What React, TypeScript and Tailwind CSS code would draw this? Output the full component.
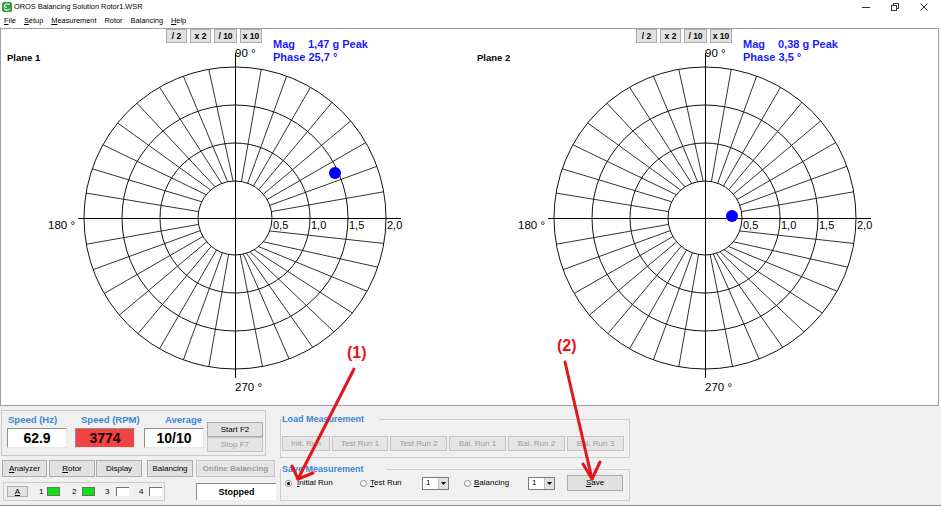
import React from 'react';

// spokes of the polar grid: [angle on inner ring, angle on outer ring]
const SPOKES: [number, number][] = [
  [10, 10], [20, 20], [30, 30], [40, 40], [50, 50], [60, 60], [70, 70], [80, 80],
  [93, 100], [101.5, 110], [111, 120], [122.5, 130.5], [131, 141], [141, 151], [154, 161], [170, 170.5],
  [190, 190], [200, 200], [210, 210], [220, 220], [230, 230], [240, 240], [250, 250], [260, 260],
  [278, 280.5], [283, 291], [288, 301], [294, 311], [301, 321], [309.5, 331], [320, 341], [339.5, 350.3],
];
const RINGS = [37, 75, 113, 151];

function PolarPlot({ dot }: { dot: [number, number] }) {
  const cx = 234;
  const cy = 189;
  const p = (r: number, a: number) => [cx + r * Math.cos((a * Math.PI) / 180), cy - r * Math.sin((a * Math.PI) / 180)];
  return (
    <svg width="470" height="376" className="block" fontFamily="Liberation Sans, Arial, sans-serif">
      {SPOKES.map(([a, b], i) => {
        const [x1, y1] = p(RINGS[0], a);
        const [x2, y2] = p(RINGS[3], b);
        return <line key={i} x1={x1} y1={y1} x2={x2} y2={y2} stroke="#333" strokeWidth="1" />;
      })}
      {RINGS.map((r) => (
        <circle key={r} cx={cx} cy={cy} r={r} fill="none" stroke="#111" strokeWidth="1" />
      ))}
      <line x1={cx + 0.5} y1="24" x2={cx + 0.5} y2="349" stroke="#000" strokeWidth="1" />
      <line x1="77" y1={cy + 0.5} x2="400" y2={cy + 0.5} stroke="#000" strokeWidth="1" />
      <text x={cx} y="28" fontSize="11.5" fill="#000">90 °</text>
      <text x="47" y="200" fontSize="11.5" fill="#000">180 °</text>
      <text x={cx} y="362" fontSize="11.5" fill="#000">270 °</text>
      <text x="272" y="200" fontSize="11" fill="#000">0,5</text>
      <text x="310" y="200" fontSize="11" fill="#000">1,0</text>
      <text x="348" y="200" fontSize="11" fill="#000">1,5</text>
      <text x="386" y="200" fontSize="11" fill="#000">2,0</text>
      <circle cx={dot[0]} cy={dot[1]} r="6" fill="#0000ff" />
    </svg>
  );
}

function ZoomBtn({ label, w }: { label: string; w: string }) {
  return (
    <div className={`${w} h-[14px] bg-[#e1e1e1] border border-[#adadad] flex items-center justify-center text-[8.5px] font-bold text-black leading-none`}>
      {label}
    </div>
  );
}

function Plane({ name, mag, phase, dot }: { name: string; mag: string; phase: string; dot: [number, number] }) {
  return (
    <div className="relative w-[470px] h-[376px] shrink-0">
      <PolarPlot dot={dot} />
      <div className="absolute top-0 left-0 flex items-start">
        <span className="w-[165px] shrink-0 pl-[6px] mt-[23px] text-[9.5px] font-bold leading-[11px] text-black">{name}</span>
        <div className="flex gap-[3px]">
          <ZoomBtn label="/ 2" w="w-[21px]" />
          <ZoomBtn label="x 2" w="w-[21px]" />
          <ZoomBtn label="/ 10" w="w-[23px]" />
          <ZoomBtn label="x 10" w="w-[22px]" />
        </div>
        <div className="ml-[11px] mt-[9px] text-[11px] font-bold leading-[13px] text-[#1a1aff] whitespace-nowrap">
          <div>
            <span className="mr-[13px]">Mag</span>
            {mag}
          </div>
          <div>Phase {phase}</div>
        </div>
      </div>
    </div>
  );
}

function Btn({ children, className = '', disabled = false }: { children: React.ReactNode; className?: string; disabled?: boolean }) {
  return (
    <div
      className={`flex items-center justify-center text-[8px] leading-none whitespace-nowrap shrink-0 ${
        disabled ? 'bg-[#e5e5e5] border border-[#c4c4c4] text-[#9c9c9c]' : 'bg-[#e1e1e1] border border-[#adadad] text-black'
      } ${className}`}
    >
      {children}
    </div>
  );
}

function Radio({ checked = false }: { checked?: boolean }) {
  return (
    <div className="w-[7px] h-[7px] rounded-full border border-[#8a8a8a] bg-white flex items-center justify-center shrink-0">
      {checked && <div className="w-[3px] h-[3px] rounded-full bg-black" />}
    </div>
  );
}

function Combo() {
  return (
    <div className="w-[27px] h-[13px] bg-white border border-[#7a7a7a] flex items-center shrink-0">
      <span className="flex-1 pl-[3px] text-[8px] leading-none">1</span>
      <div className="w-[10px] h-[11px] bg-[#e1e1e1] border-l border-[#c0c0c0] flex items-center justify-center">
        <svg width="5" height="3" viewBox="0 0 5 3">
          <path d="M0 0 H5 L2.5 3 Z" fill="#000" />
        </svg>
      </div>
    </div>
  );
}

function SpeedField({ label, labelIndent, value, red = false }: { label: string; labelIndent: string; value: string; red?: boolean }) {
  return (
    <div className="w-[60px] shrink-0 flex flex-col">
      <span className={`${labelIndent} mt-[4px] h-[9px] text-[9.5px] font-bold leading-[9px] text-[#3d85d6] whitespace-nowrap`}>{label}</span>
      <div
        className={`mt-[4px] w-[60px] h-[20px] flex items-center justify-center text-[14px] font-bold leading-none border-t border-l border-[#8f8f8f] border-r border-b border-r-[#e8e8e8] border-b-[#e8e8e8] ${
          red ? 'bg-[#f04444] text-[#1a0000]' : 'bg-white text-black'
        }`}
      >
        {value}
      </div>
    </div>
  );
}

export default function App() {
  return (
    <div className="relative w-[941px] h-[506px] overflow-hidden bg-white font-['Liberation_Sans',Arial,sans-serif] text-black select-none">
      {/* Title bar */}
      <div className="h-[14px] flex items-center">
        <svg width="10" height="10" viewBox="0 0 10 10" className="ml-[2px]">
          <rect width="10" height="10" rx="2" fill="#2f9e3a" />
          <path d="M7.5 3 C6.5 1.6 3 1.6 2.4 3.6 C2 5 3.5 5.4 5 5.2 M2.4 6.8 C3.5 8.6 7 8.4 7.6 6.6" stroke="#fff" strokeWidth="1.2" fill="none" />
        </svg>
        <span className="ml-[2px] text-[7.4px] leading-none">OROS Balancing Solution Rotor1.WSR</span>
        <div className="ml-auto flex items-center gap-[21px] pr-[13px]">
          <svg width="8" height="8" viewBox="0 0 8 8">
            <line x1="0" y1="4.5" x2="8" y2="4.5" stroke="#333" />
          </svg>
          <svg width="8" height="8" viewBox="0 0 8 8">
            <rect x="0.5" y="2.5" width="5" height="5" fill="none" stroke="#333" />
            <path d="M2.5 2.5 V0.5 H7.5 V5.5 H5.5" fill="none" stroke="#333" />
          </svg>
          <svg width="8" height="8" viewBox="0 0 8 8">
            <path d="M0.5 0.5 L7.5 7.5 M7.5 0.5 L0.5 7.5" stroke="#333" />
          </svg>
        </div>
      </div>

      {/* Menu bar */}
      <div className="h-[14px] flex items-center gap-[8px] pl-[4px] text-[7.4px] leading-none">
        <span><u>F</u>ile</span>
        <span><u>S</u>etup</span>
        <span><u>M</u>easurement</span>
        <span>Rotor</span>
        <span>Balancing</span>
        <span><u>H</u>elp</span>
      </div>

      {/* Plot area */}
      <div className="w-[939px] h-[378px] border border-[#a0a0a0] bg-white flex">
        <Plane name="Plane 1" mag="1,47 g Peak" phase="25,7 °" dot={[334, 144]} />
        <Plane name="Plane 2" mag="0,38 g Peak" phase="3,5 °" dot={[261, 187]} />
      </div>

      {/* Control panel */}
      <div className="h-[100px] bg-[#f0f0f0] flex border-b border-[#8a8a8a]">
        <div className="w-[279px] flex flex-col shrink-0">
          <div className="ml-[1px] mt-[4px] w-[265px] h-[46px] border border-[#cbcbcb] flex">
            <div className="ml-[5px]">
              <SpeedField label="Speed (Hz)" labelIndent="ml-[1px]" value="62.9" />
            </div>
            <div className="ml-[8px]">
              <SpeedField label="Speed (RPM)" labelIndent="ml-[6px]" value="3774" red />
            </div>
            <div className="ml-[9px]">
              <SpeedField label="Average" labelIndent="ml-[21px]" value="10/10" />
            </div>
            <div className="flex flex-col ml-[3px] mt-[11px]">
              <Btn className="w-[56px] h-[15px]">Start F2</Btn>
              <Btn className="w-[56px] h-[15px]" disabled>Stop F7</Btn>
            </div>
          </div>

          <div className="flex mt-[4px] h-[17px]">
            <Btn className="ml-[2px] w-[45px]"><u>A</u>nalyzer</Btn>
            <Btn className="ml-[2px] w-[46px]"><u>R</u>otor</Btn>
            <Btn className="ml-[1px] w-[46px]">Display</Btn>
            <Btn className="ml-[5px] w-[46px]">Balancin<u>g</u></Btn>
            <Btn className="ml-[3px] w-[79px] font-bold" disabled>Online Balancing</Btn>
          </div>

          <div className="flex mt-[5px]">
            <div className="ml-[3px] w-[162px] h-[19px] border border-[#cbcbcb] flex items-center text-[8px] leading-none">
              <Btn className="ml-[3px] w-[21px] h-[11px]"><u>A</u></Btn>
              <span className="ml-[11px] w-[8px]">1</span>
              <div className="w-[13px] h-[9px] bg-[#10e010] border border-[#6f6f6f]" />
              <span className="ml-[12px] w-[10px]">2</span>
              <div className="w-[13px] h-[9px] bg-[#10e010] border border-[#6f6f6f]" />
              <span className="ml-[10px] w-[11px]">3</span>
              <div className="w-[13px] h-[9px] bg-white border-t border-l border-[#6f6f6f]" />
              <span className="ml-[10px] w-[10px]">4</span>
              <div className="w-[13px] h-[9px] bg-white border-t border-l border-[#6f6f6f]" />
            </div>
            <div className="ml-[31px] mt-[1px] w-[80px] h-[17px] bg-white border-t border-l border-[#8f8f8f] flex items-center justify-center text-[9px] font-bold leading-none">
              Stopped
            </div>
          </div>
        </div>

        <div className="w-[350px] ml-[1px] flex flex-col shrink-0">
          <fieldset className="mt-[8px] border border-[#cfcfcf] pb-[6px]">
            <legend className="ml-[1px] pr-[15px] text-[9px] font-bold leading-[10px] text-[#3d85d6]">Load Measurement</legend>
            <div className="flex gap-[2px] mt-[12px] ml-[1px]">
              <Btn className="w-[48px] h-[15px]" disabled>Init. Run</Btn>
              <Btn className="w-[56px] h-[15px]" disabled>Test Run 1</Btn>
              <Btn className="w-[57px] h-[15px]" disabled>Test Run 2</Btn>
              <Btn className="w-[57px] h-[15px]" disabled>Bal. Run 1</Btn>
              <Btn className="w-[57px] h-[15px]" disabled>Bal. Run 2</Btn>
              <Btn className="w-[57px] h-[15px]" disabled>Bal. Run 3</Btn>
            </div>
          </fieldset>
          <fieldset className="mt-[6px] border border-[#cfcfcf] pb-[9px]">
            <legend className="ml-[1px] pr-[22px] text-[9px] font-bold leading-[10px] text-[#3d85d6]">Save Measurement</legend>
            <div className="flex items-center h-[16px] mt-[1px] text-[8px] leading-none">
              <div className="ml-[4px]"><Radio checked /></div>
              <span className="ml-[5px] w-[63px]"><u>I</u>nitial Run</span>
              <Radio />
              <span className="ml-[3px] w-[52px]"><u>T</u>est Run</span>
              <Combo />
              <div className="ml-[15px]"><Radio /></div>
              <span className="ml-[3px] w-[54px]"><u>B</u>alancing</span>
              <Combo />
              <Btn className="ml-[12px] w-[56px] h-[16px]"><u>S</u>ave</Btn>
            </div>
          </fieldset>
        </div>
      </div>

      {/* Red annotations */}
      <svg className="absolute inset-0 pointer-events-none" width="941" height="506" fontFamily="Liberation Sans, Arial, sans-serif">
        <text x="347" y="358" fontSize="16" fontWeight="bold" fill="#e3161c">(1)</text>
        <text x="557" y="351" fontSize="16" fontWeight="bold" fill="#e3161c">(2)</text>
        <g stroke="#e3161c" strokeWidth="3" strokeLinecap="round" fill="none">
          <line x1="354" y1="369" x2="298" y2="479" />
          <path d="M292 466 L298 479 L313 473" strokeLinejoin="round" />
          <line x1="565" y1="362" x2="592" y2="479" />
          <path d="M583 464 L592 479 L600 462" strokeLinejoin="round" />
        </g>
      </svg>
    </div>
  );
}
